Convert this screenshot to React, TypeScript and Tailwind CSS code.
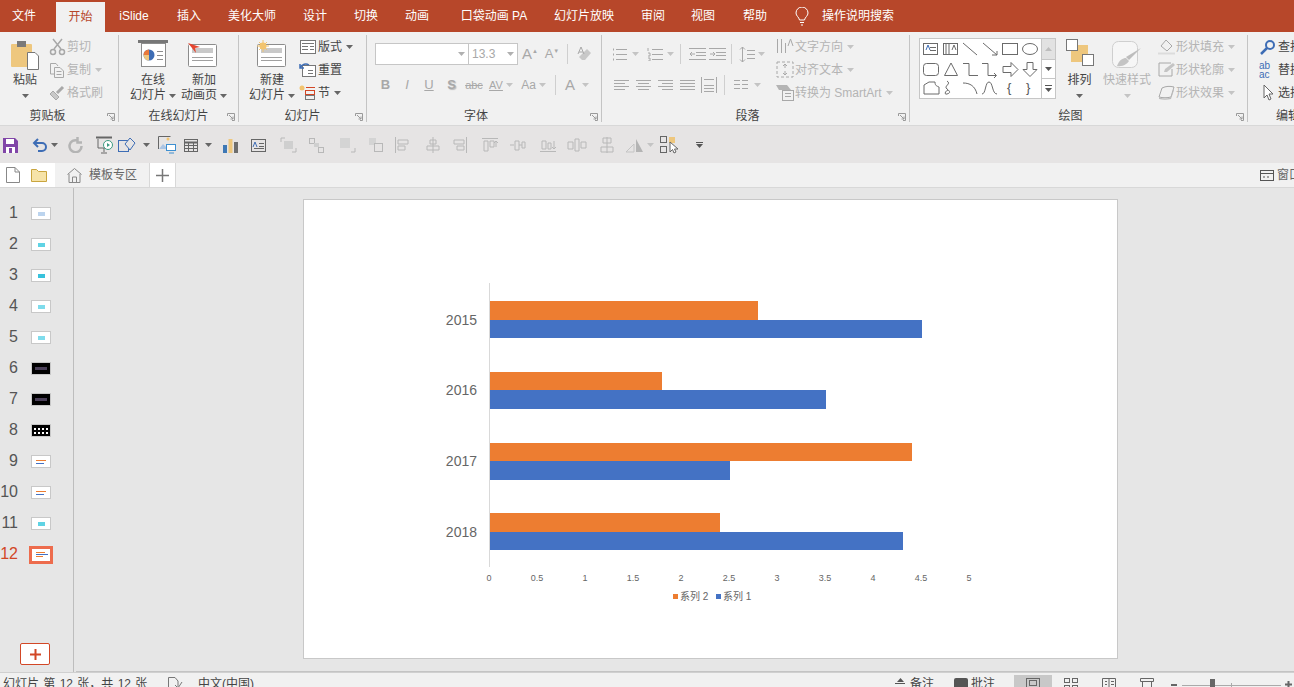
import React from "react";

const G = "#a8a8a8";

const Ic = ({ w = 20, h = 20, s = G, children }: { w?: number; h?: number; s?: string; children?: React.ReactNode }) => (
  <svg width={w} height={h} viewBox={`0 0 ${w} ${h}`} fill="none" stroke={s} strokeWidth="1" className="block shrink-0">
    {children}
  </svg>
);

const Caret = ({ c = "#8a8a8a", className = "" }: { c?: string; className?: string }) => (
  <svg width="7" height="4" viewBox="0 0 7 4" className={"shrink-0 " + className}>
    <path d="M0 0h7L3.500 4z" fill={c} />
  </svg>
);

const Launcher = () => (
  <svg width="8" height="8" viewBox="0 0 8 8" fill="none" stroke="#9a9a9a" className="absolute right-[3px] bottom-[1px]">
    <path d="M.5 3V.5H7.500V7.500H5M2 2l4 4M6 3.500V6H3.500" />
  </svg>
);

const Group = ({ label, className, lc = "", children }: { label: string; className: string; lc?: string; children: React.ReactNode }) => (
  <div className={"relative shrink-0 h-[87px] border-r border-[#c4c4c4] flex flex-col " + className}>
    <div className="h-[73px] flex">{children}</div>
    <div className={"h-[14px] leading-[16px] text-center text-[12px] text-[#444] " + lc}>{label}</div>
    <Launcher />
  </div>
);

const Big = ({ w, icon, l1, l2, dark }: { w: string; icon: React.ReactNode; l1: string; l2: string; dark?: boolean }) => (
  <div className={"flex flex-col items-center pt-[5px] shrink-0 " + w}>
    <div className="h-[33px]">{icon}</div>
    <div className={"leading-[15px] text-[12px] " + (dark ? "text-[#444]" : "text-[#b4b4b4]")}>{l1}</div>
    <div className={"leading-[15px] text-[12px] flex items-center gap-[3px] " + (dark ? "text-[#444]" : "text-[#b4b4b4]")}>
      {l2}
      <Caret c={dark ? "#666" : "#c0c0c0"} />
    </div>
  </div>
);

const Row = ({ icon, text, caret, dark }: { icon: React.ReactNode; text: string; caret?: boolean; dark?: boolean }) => (
  <div className={"h-[23px] flex items-center text-[12px] whitespace-nowrap " + (dark ? "text-[#444]" : "text-[#b4b4b4]")}>
    {icon}
    <span className="ml-[1px]">{text}</span>
    {caret && <Caret c={dark ? "#666" : "#c4c4c4"} className="ml-[4px]" />}
  </div>
);

const Sep = ({ className = "" }: { className?: string }) => <div className={"w-px h-[20px] bg-[#cfcfcf] shrink-0 " + className} />;

const Cell = ({ className, children }: { className: string; children: React.ReactNode }) => (
  <div className={"flex items-center justify-center shrink-0 " + className}>{children}</div>
);

const lines = (ys: number[], x1: number, x2: number) => ys.map((y) => <path key={y} d={`M${x1} ${y}.5H${x2}`} />);

const tabs = [
  { t: "文件", c: "w-[48px]" },
  { t: "开始", c: "w-[49px] ml-[8px] h-[30px] mt-[2px] bg-[#f1f1f1] text-[#b7472a]" },
  { t: "iSlide", c: "w-[58px]" },
  { t: "插入", c: "w-[52px]" },
  { t: "美化大师", c: "w-[74px]" },
  { t: "设计", c: "w-[52px]" },
  { t: "切换", c: "w-[50px]" },
  { t: "动画", c: "w-[52px]" },
  { t: "口袋动画 PA", c: "w-[102px]" },
  { t: "幻灯片放映", c: "w-[78px]" },
  { t: "审阅", c: "w-[60px]" },
  { t: "视图", c: "w-[40px]" },
  { t: "帮助", c: "w-[64px]" },
];

const TopBar = () => (
  <div className="h-[32px] bg-[#b7472a] flex items-start text-white text-[12px] shrink-0">
    {tabs.map((x) => (
      <div key={x.t} className={"flex items-center justify-center whitespace-nowrap shrink-0 " + (x.t === "开始" ? "" : "h-[32px] ") + x.c}>
        {x.t}
      </div>
    ))}
    <div className="w-[30px] h-[32px] flex items-center justify-center">
      <svg width="14" height="19" viewBox="0 0 14 19" fill="none" stroke="#fff">
        <path d="M4.500 13C4 10 1 9 1 6a6 6 0 0 1 12 0c0 3-3 4-3.500 7zM5 15.500h4M6 18h2" />
      </svg>
    </div>
    <div className="ml-[5px] h-[32px] flex items-center">操作说明搜索</div>
  </div>
);

const slideIcon = (
  <>
    <rect x=".5" y="4.500" width="28" height="22" rx="1" stroke="#8c8c8c" fill="#fff" />
    <rect x="4" y="8" width="21" height="5" fill="#c9c9c9" stroke="none" />
    <path d="M4 17.500H25M4 20.500H25" stroke="#a0a0a0" />
  </>
);

const Ribbon = () => (
  <div className="h-[94px] bg-[#f1f1f1] pt-[3px] flex shrink-0 border-b border-[#d8d8d8] overflow-hidden">
    <Group label="剪贴板" className="w-[119px]" lc="pr-[23px]">
      <div className="w-[50px] flex flex-col items-center pt-[5px] shrink-0">
        <div className="h-[33px]">
          <Ic w={30} h={30} s="#777">
            <rect x="1" y="4" width="21" height="23" rx="1" fill="#eec77e" stroke="none" />
            <rect x="7" y="1" width="9" height="6" fill="#7a7a7a" stroke="none" />
            <path d="M17.500 12.500H25L28.500 16V29.500H17.500z" fill="#fff" />
          </Ic>
        </div>
        <div className="leading-[15px] text-[12px] text-[#444]">粘贴</div>
        <Caret c="#666" className="mt-[6px]" />
      </div>
      <div className="flex flex-col -ml-[1px]">
        <Row
          text="剪切"
          icon={
            <Ic w={17} h={18}>
              <path d="M4 1l8 10M13 1L5 11" strokeWidth="1.500" />
              <circle cx="4" cy="14" r="2.500" strokeWidth="1.500" />
              <circle cx="13" cy="14" r="2.500" strokeWidth="1.500" />
            </Ic>
          }
        />
        <Row
          text="复制"
          caret
          icon={
            <Ic w={17} h={18}>
              <path d="M1.500 2.500H7L9 5M1.500 2.500V13H5M5.500 6.500H11L14.500 10V16.500H5.500z" />
              <path d="M7.500 10.500h5M7.500 13.500h5" />
            </Ic>
          }
        />
        <Row
          text="格式刷"
          icon={
            <Ic w={17} h={18}>
              <path d="M1 10l6 6 3-3-6-6z" fill="#c8c8c8" />
              <path d="M8 9l6-6" strokeWidth="3" />
            </Ic>
          }
        />
      </div>
    </Group>
    <Group label="在线幻灯片" className="w-[120px]">
      <Big
        dark
        w="w-[60px] ml-[4px]"
        l1="在线"
        l2="幻灯片"
        icon={
          <Ic w={30} h={30} s="#8c8c8c">
            <path d="M0 1.500H30" stroke="#777" strokeWidth="3" />
            <rect x="3.500" y="3.500" width="24" height="23" fill="#fff" />
            <circle cx="11" cy="15" r="5.500" fill="#3e6db5" stroke="none" />
            <path d="M11 15V9.500A5.500 5.500 0 0 0 5.500 15z" fill="#e9793a" stroke="none" />
            <path d="M11 15H5.500A5.500 5.500 0 0 0 11 20.500z" fill="#eec77e" stroke="none" />
            <path d="M19 11.500h6M19 15.500h6M19 19.500h6" />
          </Ic>
        }
      />
      <Big
        dark
        w="w-[52px] -ml-[5px]"
        l1="新加"
        l2="动画页"
        icon={
          <Ic w={32} h={30}>
            {slideIcon}
            <path d="M0 6l12 4-5 1 1 5z" fill="#e5452f" stroke="none" transform="translate(0 -3)" />
          </Ic>
        }
      />
    </Group>
    <Group label="幻灯片" className="w-[128px]">
      <Big
        dark
        w="w-[60px] ml-[3px]"
        l1="新建"
        l2="幻灯片"
        icon={
          <Ic w={30} h={30}>
            {slideIcon}
            <circle cx="6" cy="6" r="3.500" fill="#f2c46f" stroke="none" />
            <path d="M6 0v12M0 6h12M2 2l8 8M10 2l-8 8" stroke="#f2c46f" />
          </Ic>
        }
      />
      <div className="flex flex-col ml-[-3px]">
        <Row
          dark
          text="版式"
          caret
          icon={
            <Ic w={18} h={16} s="#777">
              <rect x="1.500" y="1.500" width="15" height="13" fill="#fff" />
              <path d="M3 4.500h12M3 7.500h6M3 10.500h6M11 7.500h4M11 10.500h4" />
            </Ic>
          }
        />
        <Row
          dark
          text="重置"
          icon={
            <Ic w={18} h={16} s="#777">
              <rect x="3.500" y="3.500" width="13" height="11" fill="#fff" />
              <path d="M1 6c2-4 6-5 9-3M1 2v4h4" stroke="#3e6db5" strokeWidth="1.500" />
              <path d="M9 8.500h5M9 11.500h5" />
            </Ic>
          }
        />
        <Row
          dark
          text="节"
          caret
          icon={
            <Ic w={18} h={16} s="#777">
              <circle cx="3" cy="3" r="2.500" fill="#f2c46f" stroke="none" />
              <path d="M7 2.500h9" stroke="#d24726" />
              <rect x="6.500" y="5.500" width="9" height="4" stroke="#d24726" />
              <rect x="6.500" y="10.500" width="9" height="4" />
            </Ic>
          }
        />
      </div>
    </Group>
    <Group label="字体" className="w-[235px]" lc="pr-[16px]">
      <div className="pl-[8px] pt-[8px] flex flex-col">
        <div className="h-[22px] flex items-center">
          <div className="w-[94px] h-[22px] bg-white border border-[#c6c6c6] flex items-center justify-end pr-[3px]">
            <Caret c="#b0b0b0" />
          </div>
          <div className="w-[50px] h-[22px] -ml-px bg-white border border-[#c6c6c6] flex items-center justify-between pl-[3px] pr-[3px] text-[12px] text-[#a8a8a8]">
            13.3
            <Caret c="#b0b0b0" />
          </div>
          <Cell className="w-[22px] ml-[1px] text-[15px] text-[#a8a8a8]">
            A<sup className="text-[6px]">▲</sup>
          </Cell>
          <Cell className="w-[22px] text-[13px] text-[#a8a8a8]">
            A<sup className="text-[6px]">▼</sup>
          </Cell>
          <Sep className="ml-[4px]" />
          <Cell className="w-[24px] ml-[4px]">
            <Ic w={16} h={16}>
              <path d="M6 14l-3-3 8-8 4 4-6 7z" fill="#c8c8c8" stroke="none" />
              <path d="M2 8L5 1l3 7M3 6h4" />
            </Ic>
          </Cell>
        </div>
        <div className="h-[22px] mt-[9px] flex items-center text-[#a8a8a8]">
          <Cell className="w-[21px] font-bold text-[13px]">B</Cell>
          <Cell className="w-[22px] italic text-[13px]">I</Cell>
          <Cell className="w-[22px] underline text-[13px]">U</Cell>
          <Cell className="w-[23px] font-bold text-[13px] [text-shadow:1px_1px_1px_#bbb]">S</Cell>
          <Cell className="w-[22px] line-through text-[11px]">abc</Cell>
          <Cell className="w-[32px] text-[11px] gap-[3px]">
            <span className="leading-[10px] underline">AV</span>
            <Caret c="#c4c4c4" />
          </Cell>
          <Cell className="w-[33px] text-[12px] gap-[3px]">
            Aa
            <Caret c="#c4c4c4" />
          </Cell>
          <Sep className="ml-[5px]" />
          <Cell className="w-[40px] ml-[1px] text-[15px] gap-[7px]">
            A
            <Caret c="#c4c4c4" />
          </Cell>
        </div>
      </div>
    </Group>
    <Group label="段落" className="w-[308px]" lc="pr-[16px]">
      <div className="pl-[8px] pt-[8px] flex flex-col w-[174px] shrink-0">
        <div className="h-[22px] flex items-center">
          <Cell className="w-[24px] ml-[-2px]">
            <Ic w={16} h={14}>
              <path d="M4 2.500h11M4 7.500h11M4 12.500h11" />
              <path d="M1 2.500h1M1 7.500h1M1 12.500h1" strokeWidth="2" />
            </Ic>
          </Cell>
          <Caret c="#c4c4c4" />
          <Cell className="w-[24px] ml-[4px]">
            <Ic w={16} h={14}>
              <path d="M5 2.500h11M5 7.500h11M5 12.500h11M1 1v3M1 6h2v3H1M1 11h2v3H1" />
            </Ic>
          </Cell>
          <Caret c="#c4c4c4" />
          <Sep className="ml-[6px]" />
          <Cell className="w-[20px] ml-[6px]">
            <Ic w={17} h={14}>
              <path d="M0 1.500h17M7 5.500h10M7 8.500h10M0 12.500h17M1 7h5M3 5L1 7l2 2" />
            </Ic>
          </Cell>
          <Cell className="w-[20px]">
            <Ic w={17} h={14}>
              <path d="M0 1.500h17M7 5.500h10M7 8.500h10M0 12.500h17M1 7h5M4 5l2 2-2 2" />
            </Ic>
          </Cell>
          <Sep className="ml-[4px]" />
          <Cell className="w-[22px] ml-[4px]">
            <Ic w={16} h={17}>
              <path d="M3.500 1v15M1 3.500L3.500 1 6 3.500M1 13.500L3.500 16 6 13.500M8 4.500h8M8 8.500h8M8 12.500h8" />
            </Ic>
          </Cell>
          <Caret c="#c4c4c4" />
        </div>
        <div className="h-[22px] mt-[9px] flex items-center">
          {[0, 1, 2, 3].map((i) => (
            <Cell key={i} className="w-[22px]">
              <Ic w={15} h={11}>
                {i === 0 && <path d="M0 .5h15M0 3.500h11M0 6.500h15M0 9.500h11" />}
                {i === 1 && <path d="M0 .5h15M2 3.500h11M0 6.500h15M2 9.500h11" />}
                {i === 2 && <path d="M0 .5h15M4 3.500h11M0 6.500h15M4 9.500h11" />}
                {i === 3 && <path d="M0 .5h15M0 3.500h15M0 6.500h15M0 9.500h15" />}
              </Ic>
            </Cell>
          ))}
          <Cell className="w-[22px]">
            <Ic w={16} h={16}>
              <path d="M.5 0v16M15.500 0v16M3 2.500h10M3 8.500h10M3 11.500h10M3 14.500h10" />
            </Ic>
          </Cell>
          <Sep className="ml-[4px]" />
          <Cell className="w-[26px] ml-[3px]">
            <Ic w={14} h={10}>
              {lines([0, 4, 8], 0, 6)}
              {lines([0, 4, 8], 8, 14)}
            </Ic>
          </Cell>
          <Caret c="#c4c4c4" />
        </div>
      </div>
      <div className="flex flex-col">
        <Row
          text="文字方向"
          caret
          icon={
            <Ic w={18} h={17}>
              <path d="M1.500 1v14M5.500 1v14M9.500 5v10M12 8l2.500-7L17 8" />
            </Ic>
          }
        />
        <Row
          text="对齐文本"
          caret
          icon={
            <Ic w={18} h={17}>
              <path d="M1 1h16v15H1z" strokeDasharray="3 2" />
              <path d="M9 3v4M7 5l2-2 2 2M9 14v-4M7 12l2 2 2-2" />
            </Ic>
          }
        />
        <Row
          text="转换为 SmartArt"
          caret
          icon={
            <Ic w={18} h={17}>
              <path d="M0 1h11l4 5H3z" fill="#b4b4b4" stroke="none" />
              <rect x="6.500" y="6.500" width="11" height="10" fill="#f1f1f1" />
              <path d="M9 9.500h6M9 12.500h6" />
            </Ic>
          }
        />
      </div>
    </Group>
    <Group label="绘图" className="w-[338px]" lc="pr-[16px]">
      <div className="ml-[9px] mt-[3px] w-[137px] h-[61px] border border-[#c6c6c6] bg-white flex shrink-0">
        <div className="w-[121px] shrink-0">
          <svg width="121" height="59" viewBox="0 0 121 59" fill="none" stroke="#6b6b6b">
            <rect x="3.500" y="4.500" width="14" height="11" />
            <path d="M10 8.500h6M10 11.500h6" />
            <path d="M6 11l2-5 2 5" stroke="#3e6db5" />
            <rect x="23.500" y="4.500" width="14" height="11" />
            <path d="M26 5v10M29 5v10M32 11l2-5 2 5" />
            <path d="M43 4l14 12M63 4l14 12M72 16h5v-4" />
            <rect x="82.500" y="4.500" width="15" height="11" />
            <ellipse cx="110" cy="10" rx="7.500" ry="5.500" />
            <rect x="3.500" y="24.500" width="15" height="12" rx="3" />
            <path d="M31 24l-6.500 12.500h13z" />
            <path d="M43 24.500h6v12h9M62 24.500h6v12h8M74 34l2.500 2.500L74 39" />
            <path d="M83 27.500h8v-4l7 7-7 7v-4h-8z" />
            <path d="M107 23.500h6v7h4l-7 7-7-7h4z" />
            <path d="M4 46l5-3h6c0 4 2 4 4 5v7H4z" />
            <path d="M27 42c5 3-4 5 0 8s3 4 0 5-2-3 1-4" />
            <path d="M43 44c7 0 12 3 14 11M62 55c4 0 3-12 7-12s3 12 8 12" />
            <text x="87" y="53" fontSize="13" fill="#555" stroke="none" fontFamily="Liberation Sans">{"{"}</text>
            <text x="106" y="53" fontSize="13" fill="#555" stroke="none" fontFamily="Liberation Sans">{"}"}</text>
          </svg>
        </div>
        <div className="w-[14px] border-l border-[#c6c6c6] flex flex-col">
          <div className="h-[20px] bg-[#e2e2e2] flex items-center justify-center">
            <Caret c="#bdbdbd" className="rotate-180" />
          </div>
          <div className="h-[20px] border-y border-[#c6c6c6] flex items-center justify-center">
            <Caret c="#555" />
          </div>
          <div className="flex-1 flex flex-col items-center justify-center gap-[2px]">
            <div className="w-[7px] h-px bg-[#555]" />
            <Caret c="#555" />
          </div>
        </div>
      </div>
      <div className="w-[47px] shrink-0 flex flex-col items-center pt-[5px]">
        <div className="h-[33px] -mt-[1px]">
          <Ic w={28} h={28} s="#777">
            <rect x="5" y="6" width="17" height="17" fill="#eec77e" stroke="none" />
            <rect x=".5" y=".5" width="11" height="11" fill="#fff" />
            <rect x="16.500" y="15.500" width="11" height="11" fill="#fff" />
          </Ic>
        </div>
        <div className="leading-[15px] text-[12px] text-[#444] mt-[1px]">排列</div>
        <Caret c="#666" className="mt-[6px]" />
      </div>
      <div className="w-[48px] shrink-0 flex flex-col items-center pt-[5px]">
        <div className="h-[33px]">
          <Ic w={30} h={30} s="#cfcfcf">
            <rect x=".5" y="1.500" width="25" height="26" rx="6" fill="#f6f6f6" />
            <path d="M29 8L17 20l-3-3z" fill="#bdbdbd" stroke="none" />
            <path d="M5 26c2-6 6-8 9-8l3 3c-2 3-6 6-12 5z" fill="#c4c4c4" stroke="none" />
          </Ic>
        </div>
        <div className="leading-[15px] text-[12px] text-[#b4b4b4] whitespace-nowrap">快速样式</div>
        <Caret c="#c4c4c4" className="mt-[6px]" />
      </div>
      <div className="flex flex-col ml-[7px]">
        <Row
          text="形状填充"
          caret
          icon={
            <Ic w={17} h={17}>
              <path d="M3 8l5-6 6 6-5 5z" />
              <path d="M0 15.500h17" stroke="#dcdcdc" strokeWidth="2" />
            </Ic>
          }
        />
        <Row
          text="形状轮廓"
          caret
          icon={
            <Ic w={17} h={17}>
              <path d="M1 2h12M1 2v13h13V8" />
              <path d="M6 11l1-3 8-6 2 2-8 7z" fill="#c4c4c4" stroke="none" />
            </Ic>
          }
        />
        <Row
          text="形状效果"
          caret
          icon={
            <Ic w={17} h={17}>
              <path d="M1 13l3-9c4-2 8-2 12-1l-3 10c-4 1-8 1-12 0z" fill="#f1f1f1" />
              <path d="M1 13c4 2 8 2 12 0l3-10v3l-3 9c-4 1-8 1-12 0z" fill="#bdbdbd" stroke="none" />
            </Ic>
          }
        />
      </div>
    </Group>
    <div className="shrink-0 w-[80px] h-[87px] flex flex-col pl-[11px]">
      <div className="h-[73px] flex flex-col">
        <Row
          dark
          text="查找"
          icon={
            <Ic w={18} h={16} s="#3e6db5">
              <circle cx="11" cy="6" r="4" strokeWidth="2" />
              <path d="M8 9l-6 6" strokeWidth="2.500" />
            </Ic>
          }
        />
        <div className="h-[23px] flex items-center text-[#444] text-[12px] whitespace-nowrap">
          <span className="w-[18px] text-[10px] leading-[9px] text-[#3e6db5]">
            ab
            <br />
            ac
          </span>
          <span className="ml-[1px]">替换</span>
        </div>
        <Row
          dark
          text="选择"
          icon={
            <Ic w={18} h={17} s="#666">
              <path d="M5 1v13l3-3 2 5 2-1-2-5h4z" fill="#fff" />
            </Ic>
          }
        />
      </div>
      <div className="h-[14px] leading-[16px] text-[12px] text-[#444] pl-[17px] whitespace-nowrap">编辑</div>
    </div>
  </div>
);

const grp = (a: React.ReactNode) => (
  <Ic w={20} h={20} s="#b8b8b8">
    {a}
  </Ic>
);

const Qat = () => (
  <div className="h-[37px] bg-[#e6e4e4] flex items-center shrink-0 pt-[1px]">
    <Cell className="w-[20px]">
      <Ic w={15} h={15} s="#7a3f9f">
        <path d="M0 0h12l3 3v12H0z" fill="#8146a8" stroke="none" />
        <rect x="3" y="1" width="8" height="5" fill="#fff" stroke="none" />
        <rect x="3" y="9" width="9" height="6" fill="#fff" stroke="none" />
        <rect x="6" y="10" width="3" height="5" fill="#8146a8" stroke="none" />
      </Ic>
    </Cell>
    <Cell className="w-[20px] ml-[10px]">
      <Ic w={16} h={16} s="#3e6db5">
        <path d="M2 6h8a4 4 0 0 1 0 8H6M6 2L2 6l4 4" strokeWidth="2" />
      </Ic>
    </Cell>
    <Cell className="w-[8px]">
      <Caret c="#666" />
    </Cell>
    <Cell className="w-[20px] ml-[7px]">
      <Ic w={15} h={16} s="#b4b4b4">
        <path d="M9.500 3.500A6 6 0 1 0 13.500 9M9.500 0v5.500H14" strokeWidth="2.500" />
      </Ic>
    </Cell>
    <Cell className="w-[20px] ml-[10px]">
      <Ic w={18} h={18} s="#666">
        <path d="M0 1.500h16" strokeWidth="2" />
        <path d="M2 3v9h8M8 12v4M5 17h6" />
        <circle cx="12" cy="9" r="4.500" fill="#fff" stroke="#3b9b82" />
        <path d="M11 7l3 2-3 2z" fill="#3b9b82" stroke="none" />
      </Ic>
    </Cell>
    <Cell className="w-[20px] ml-[2px]">
      <Ic w={18} h={17} s="#3e6db5">
        <rect x=".5" y="3.500" width="10" height="11" />
        <path d="M12 1l5 5-5 7-5-6z" fill="#e6e4e4" />
      </Ic>
    </Cell>
    <Cell className="w-[8px] ml-[5px]">
      <Caret c="#666" />
    </Cell>
    <Cell className="w-[20px] ml-[7px]">
      <Ic w={18} h={18} s="#666">
        <path d="M.5 13V.5h12" />
        <path d="M1 13l4-5 5 5z" fill="#aac4e4" stroke="none" />
        <circle cx="10" cy="3" r="1.500" fill="#f2c46f" stroke="none" />
        <rect x="8.500" y="8.500" width="9" height="6" fill="#fff" stroke="#3e8fd0" />
        <path d="M11 17h5" stroke="#3e8fd0" />
      </Ic>
    </Cell>
    <Cell className="w-[20px] ml-[4px]">
      <Ic w={14} h={13} s="#666">
        <rect x=".5" y=".5" width="13" height="12" />
        <path d="M1 3.500h12" strokeWidth="2" />
        <path d="M1 6.500h12M1 9.500h12M4.500 3v10M9.500 3v10" />
      </Ic>
    </Cell>
    <Cell className="w-[8px] ml-[3px]">
      <Caret c="#666" />
    </Cell>
    <Cell className="w-[20px] ml-[8px]">
      <Ic w={15} h={15} s="none">
        <rect x="0" y="7" width="4" height="8" fill="#3e78b5" />
        <rect x="5.500" y="1" width="4" height="14" fill="#eec77e" />
        <rect x="11" y="4" width="4" height="11" fill="#6e6e6e" />
      </Ic>
    </Cell>
    <Cell className="w-[20px] ml-[8px]">
      <Ic w={15} h={13} s="#666">
        <rect x=".5" y=".5" width="14" height="12" />
        <path d="M8 4.500h5M8 7.500h5M3 9.500h10" />
        <path d="M2 8l2-5 2 5" stroke="#3e6db5" />
      </Ic>
    </Cell>
    <Cell className="w-[20px] ml-[10px]">
      {grp(
        <>
          <path d="M3 3h4M3 3v4M14 17h4M18 13v4" />
          <rect x="6" y="6" width="9" height="8" fill="#cfcfcf" stroke="none" />
        </>
      )}
    </Cell>
    <Cell className="w-[20px] ml-[8px]">
      {grp(
        <>
          <rect x="3.500" y="3.500" width="5" height="5" />
          <rect x="12.500" y="12.500" width="5" height="5" />
          <rect x="8" y="8" width="5" height="4" fill="#cfcfcf" stroke="none" />
        </>
      )}
    </Cell>
    <Cell className="w-[20px] ml-[11px]">
      {grp(
        <>
          <rect x="3" y="3" width="10" height="10" fill="#d4d4d4" stroke="none" />
          <path d="M14 17h4v-4" />
        </>
      )}
    </Cell>
    <Cell className="w-[20px] ml-[9px]">
      {grp(
        <>
          <rect x="3" y="3" width="7" height="7" fill="#d4d4d4" stroke="none" />
          <rect x="8.500" y="8.500" width="8" height="8" fill="#e6e4e4" />
        </>
      )}
    </Cell>
    <Cell className="w-[20px] ml-[6px]">{grp(<path d="M3.500 2v16M6 5h10v4H6zM6 11h7v4H6z" />)}</Cell>
    <Cell className="w-[20px] ml-[11px]">{grp(<path d="M10 2v16M7 5h6v4H7zM4 11h12v4H4z" />)}</Cell>
    <Cell className="w-[20px] ml-[7px]">{grp(<path d="M16.500 2v16M4 5h10v4H4zM7 11h7v4H7z" />)}</Cell>
    <Cell className="w-[20px] ml-[10px]">{grp(<path d="M2 3.500h16M4 6h4v10H4zM10 6h4v6h-4zM16 12V6M14 8l2-2 2 2" />)}</Cell>
    <Cell className="w-[20px] ml-[8px]">{grp(<path d="M2 10h4M7 6h4v9H7zM11 10h3M14 7h3v6h-3z" />)}</Cell>
    <Cell className="w-[20px] ml-[10px]">{grp(<path d="M2 16.500h16M4 6h4v8H4zM10 8h3v6h-3zM16 6v8M14 12l2 2 2-2" />)}</Cell>
    <Cell className="w-[20px] ml-[9px]">{grp(<path d="M1 7h5v7H1zM8 4h4v12H8zM14 7h5v6h-5z" />)}</Cell>
    <Cell className="w-[20px] ml-[10px]">{grp(<path d="M10 2v16M6 3h8v5H6zM4 12h12v5H4z" />)}</Cell>
    <Cell className="w-[20px] ml-[8px]">
      <Ic w={20} h={18} s="#c4c4c4">
        <path d="M1 16l8-8v8z" />
        <path d="M11 3l7 13h-7z" fill="#b4b4b4" stroke="none" />
      </Ic>
    </Cell>
    <Cell className="w-[8px] ml-[1px]">
      <Caret c="#c4c4c4" />
    </Cell>
    <Cell className="w-[20px] ml-[5px]">
      <Ic w={18} h={18} s="#666">
        <rect x=".5" y=".5" width="6" height="6" />
        <rect x=".5" y="10.500" width="6" height="6" />
        <rect x="9" y="1" width="6" height="6" fill="#eec77e" stroke="none" />
        <path d="M10 6v10l2.500-2.500L14 17l2-1-1.500-3H18z" fill="#fff" />
      </Ic>
    </Cell>
    <Cell className="w-[8px] ml-[16px]">
      <div className="flex flex-col items-center gap-[1px]">
        <div className="w-[7px] h-px bg-[#555]" />
        <Caret c="#555" />
      </div>
    </Cell>
  </div>
);

const TabStrip = () => (
  <div className="h-[25px] bg-[#f1f1f1] flex shrink-0 border-b border-[#d8d8d8] text-[12px] text-[#666]">
    <div className="w-[55px] bg-white flex items-center pl-[6px] gap-[11px] shrink-0">
      <Ic w={14} h={16} s="#888">
        <path d="M.5.5H9L13.500 5V15.500H.5zM9 .5V5h4.500" fill="#fff" />
      </Ic>
      <Ic w={16} h={14} s="#c9a53e">
        <path d="M.5 13.500V1.500h5l2 2h8v10z" fill="#f6e3a8" />
      </Ic>
    </div>
    <div className="w-[94px] ml-px bg-[#f1f1f1] border-r border-[#d8d8d8] flex items-center pl-[11px] gap-[7px] shrink-0">
      <Ic w={15} h={15} s="#888">
        <path d="M.5 6.500L7.500.5l7 6M2 6v8.500h11V6M5.500 14.500V9h4v5.500" />
      </Ic>
      模板专区
    </div>
    <div className="w-[26px] bg-white border-r border-[#d8d8d8] flex items-center justify-center shrink-0">
      <Ic w={13} h={13} s="#777">
        <path d="M6.500 0v13M0 6.500h13" strokeWidth="1.500" />
      </Ic>
    </div>
    <div className="flex-1 flex items-center justify-end overflow-hidden">
      <div className="flex items-center gap-[3px] w-[34px] shrink-0 whitespace-nowrap">
        <Ic w={14} h={11} s="#555">
          <rect x=".5" y=".5" width="13" height="10" />
          <path d="M1 3.500h12M3 7h2M7 7h2" />
        </Ic>
        窗口
      </div>
    </div>
  </div>
);

const thumbs = [
  { n: 1, k: "bg-[#bcd4ee]" },
  { n: 2, k: "bg-[#5fd3e4]" },
  { n: 3, k: "bg-[#38c2dc]" },
  { n: 4, k: "bg-[#7fdcec]" },
  { n: 5, k: "bg-[#7fdcec]" },
  { n: 6, k: "dark" },
  { n: 7, k: "dark" },
  { n: 8, k: "dots" },
  { n: 9, k: "bars" },
  { n: 10, k: "bars" },
  { n: 11, k: "bg-[#5fd3e4]" },
  { n: 12, k: "sel" },
];

const Thumb = ({ n, k }: { n: number; k: string }) => {
  const sel = k === "sel";
  return (
    <div className="h-[31px] flex items-center shrink-0">
      <div className={"w-[18px] text-right text-[16px] leading-none -mt-[2px] " + (sel ? "text-[#d24726]" : "text-[#555]")}>{n}</div>
      {sel ? (
        <div className="ml-[11px] w-[24px] h-[18px] border-[3px] border-[#ed6c4d] bg-white flex flex-col justify-center pl-[4px] gap-[1px]">
          <div className="w-[9px] h-px bg-[#ed7d31]" />
          <div className="w-[12px] h-px bg-[#4472c4]" />
          <div className="w-[7px] h-px bg-[#ed7d31]" />
        </div>
      ) : (
        <div
          className={
            "ml-[13px] w-[20px] h-[13px] border border-[#c8c8c8] flex items-center justify-center " +
            (k === "dark" || k === "dots" ? "bg-black" : "bg-white")
          }
        >
          {k === "dark" && <div className="w-[12px] h-[3px] bg-[#4a3f58]" />}
          {k === "dots" && <div className="w-[14px] h-[6px] border-y-2 border-dotted border-white" />}
          {k === "bars" && (
            <div className="flex flex-col gap-[2px]">
              <div className="w-[10px] h-px bg-[#ed7d31]" />
              <div className="w-[8px] h-px bg-[#4472c4]" />
            </div>
          )}
          {k.startsWith("bg-") && <div className={"w-[7px] h-[4px] " + k} />}
        </div>
      )}
    </div>
  );
};

const bars = [
  { y: 320, o: [301, 19, 758], b: [320, 18, 922], label: "2015" },
  { y: 390, o: [372, 18, 662], b: [390, 19, 826], label: "2016" },
  { y: 461, o: [443, 18, 912], b: [461, 19, 730], label: "2017" },
  { y: 532, o: [513, 19, 720], b: [532, 18, 903], label: "2018" },
];

const Chart = () => (
  <svg width="813" height="457" viewBox="304 200 813 457" className="block" fontFamily="Liberation Sans, Noto Sans CJK SC, sans-serif">
    <path d="M489.500 283V567" stroke="#d9d9d9" />
    {bars.map((r) => (
      <g key={r.label}>
        <rect x="490" y={r.o[0]} width={r.o[2] - 490} height={r.o[1]} fill="#ed7d31" />
        <rect x="490" y={r.b[0]} width={r.b[2] - 490} height={r.b[1]} fill="#4472c4" />
        <text x="477" y={r.y + 5} fontSize="14" fill="#666" textAnchor="end">
          {r.label}
        </text>
      </g>
    ))}
    {["0", "0.5", "1", "1.5", "2", "2.5", "3", "3.5", "4", "4.5", "5"].map((t, i) => (
      <text key={t} x={489 + i * 48} y="581" fontSize="9" fill="#666" textAnchor="middle">
        {t}
      </text>
    ))}
    <rect x="673" y="594" width="5" height="5" fill="#ed7d31" />
    <text x="680" y="600" fontSize="10" fill="#666">系列 2</text>
    <rect x="716" y="594" width="5" height="5" fill="#4472c4" />
    <text x="723" y="600" fontSize="10" fill="#666">系列 1</text>
  </svg>
);

const StatusBar = () => (
  <div className="h-[15px] shrink-0 overflow-hidden bg-[#f1f1f1] flex items-start text-[12px] text-[#444] pl-[3px] pt-[3px] leading-[16px] whitespace-nowrap border-t border-[#d0d0d0]">
    <span className="w-[164px] shrink-0 [word-spacing:1px]">幻灯片 第 12 张，共 12 张</span>
    <Ic w={16} h={14} s="#777">
      <path d="M1.500 1.500H8L11 5v8H1.500zM8 9l3 3 4-6" />
    </Ic>
    <span className="ml-[15px] w-[692px] shrink-0">中文(中国)</span>
    <div className="w-[20px] mt-[2px] flex flex-col items-center shrink-0">
      <Caret c="#555" className="rotate-180" />
      <div className="w-[10px] h-px bg-[#555] mt-[1px]" />
    </div>
    <span className="w-[26px] shrink-0">备注</span>
    <div className="ml-[18px] w-[14px] h-[12px] mt-[2px] rounded-[2px] bg-[#555] shrink-0" />
    <span className="ml-[3px] w-[24px] shrink-0">批注</span>
    <div className="ml-[19px] w-[38px] h-[14px] -mt-[1px] pt-[3px] bg-[#c8c8c8] flex justify-center shrink-0">
      <Ic w={14} h={12} s="#666">
        <rect x=".5" y=".5" width="13" height="11" />
        <rect x="3.500" y="2.500" width="7" height="5" />
      </Ic>
    </div>
    <div className="w-[38px] mt-[2px] flex justify-center shrink-0">
      <Ic w={14} h={12} s="#666">
        <rect x=".5" y=".5" width="5" height="4" />
        <rect x="8.500" y=".5" width="5" height="4" />
        <rect x=".5" y="7.500" width="5" height="4" />
        <rect x="8.500" y="7.500" width="5" height="4" />
      </Ic>
    </div>
    <div className="w-[38px] mt-[2px] flex justify-center shrink-0">
      <Ic w={14} h={12} s="#666">
        <path d="M.5.5h13v11H.5zM7 .5v11M3 3.500h2M3 6.500h2M9 3.500h3M9 6.500h3" />
      </Ic>
    </div>
    <div className="w-[38px] mt-[2px] flex justify-center shrink-0">
      <Ic w={14} h={12} s="#666">
        <path d="M.5.5h13v3H.5zM2.500 3.500v8h9v-8" />
      </Ic>
    </div>
    <div className="ml-[5px] w-[6px] h-[2px] bg-[#666] mt-[8px] shrink-0" />
    <div className="ml-[5px] w-[99px] h-px bg-[#aaa] mt-[9px] relative shrink-0">
      <div className="absolute left-[28px] -top-[6px] w-[5px] h-[12px] bg-[#666]" />
      <div className="absolute left-[49px] -top-[2px] w-px h-[5px] bg-[#aaa]" />
    </div>
    <div className="ml-[4px] mt-[5px] shrink-0">
      <Ic w={7} h={7} s="#666">
        <path d="M3.500 0v7M0 3.500h7" strokeWidth="2" />
      </Ic>
    </div>
  </div>
);

export default function App() {
  return (
    <div className="w-[1294px] h-[687px] overflow-hidden flex flex-col bg-[#e6e6e6] font-['Liberation_Sans','Noto_Sans_CJK_SC',sans-serif]">
      <TopBar />
      <Ribbon />
      <Qat />
      <TabStrip />
      <div className="flex-1 flex min-h-0">
        <div className="w-[74px] shrink-0 border-r border-[#bdbdbd] flex flex-col pt-[10px] pb-[7px]">
          {thumbs.map((t) => (
            <Thumb key={t.n} n={t.n} k={t.k} />
          ))}
          <div className="mt-auto ml-[20px] w-[30px] h-[22px] border border-[#d24726] rounded-[2px] bg-white flex items-center justify-center">
            <Ic w={11} h={11} s="#d24726">
              <path d="M5.500 0v11M0 5.500h11" strokeWidth="2" />
            </Ic>
          </div>
        </div>
        <div className="flex-1 pl-[227px] pt-[11px] border-b border-[#c4c4c4] ml-[2px]">
          <div className="w-[815px] h-[460px] border border-[#c8c8c8] bg-white">
            <Chart />
          </div>
        </div>
      </div>
      <StatusBar />
    </div>
  );
}
